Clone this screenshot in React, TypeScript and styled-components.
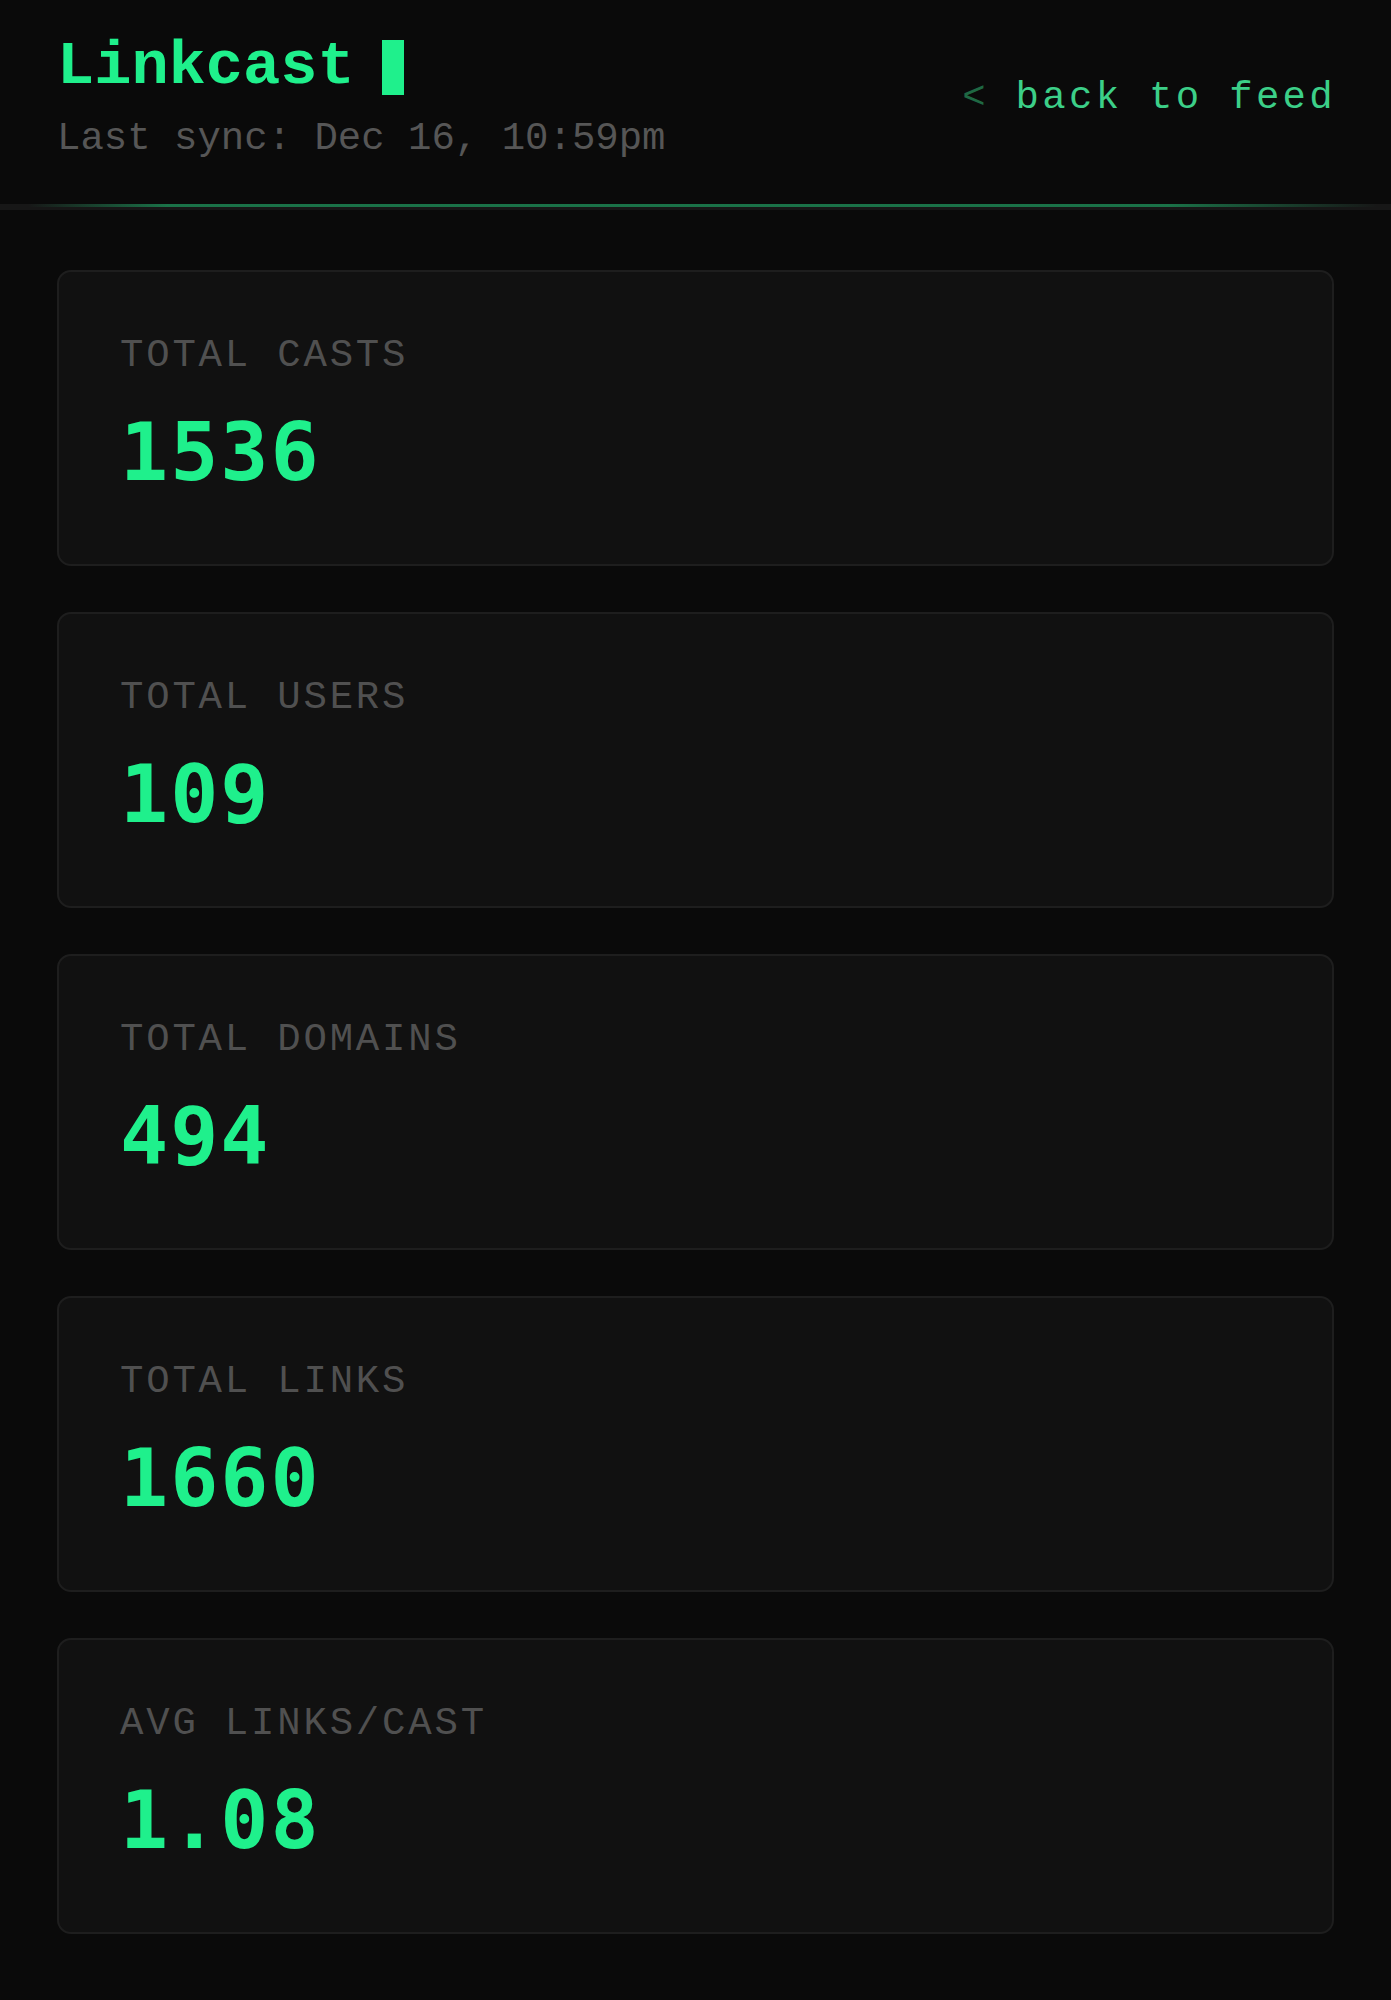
import React from "react";
import styled, { createGlobalStyle } from "styled-components";

const GlobalStyle = createGlobalStyle`
  html, body {
    margin: 0;
    padding: 0;
    background: #0a0a0a;
  }
  body {
    font-family: "Liberation Mono", "DejaVu Sans Mono", monospace;
    -webkit-font-smoothing: antialiased;
  }
`;

const Page = styled.div`
  min-height: 2000px;
  background: #0a0a0a;
  display: flex;
  flex-direction: column;
`;

const Header = styled.header`
  display: flex;
  justify-content: space-between;
  align-items: center;
  padding: 30px 55px 41px 57px;
`;

const Brand = styled.div`
  display: flex;
  flex-direction: column;
`;

const TitleRow = styled.div`
  display: flex;
  align-items: center;
  height: 74px;
`;

const Title = styled.h1`
  margin: 0;
  font-family: "Liberation Mono", monospace;
  font-weight: 700;
  font-size: 62px;
  line-height: 74px;
  color: #1ff08c;
`;

const Cursor = styled.span`
  display: inline-block;
  width: 22px;
  height: 55px;
  margin-left: 27px;
  background: #1ff08c;
`;

const Sync = styled.div`
  margin-top: 12px;
  font-family: "Liberation Mono", monospace;
  font-size: 39px;
  line-height: 47px;
  color: #565656;
`;

const BackLink = styled.a`
  font-family: "Liberation Mono", monospace;
  font-size: 39px;
  line-height: 47px;
  letter-spacing: 3.3px;
  color: #3ccf88;
  text-decoration: none;
  margin-top: 4px;
`;

const Chevron = styled.span`
  color: #1f6843;
`;

const HeaderRule = styled.div`
  height: 6px;
  background-color: #171717;
  background-image: linear-gradient(
    90deg,
    transparent 2%,
    rgba(31, 240, 140, 0.42) 12%,
    rgba(31, 240, 140, 0.42) 84%,
    transparent 99%
  );
  background-size: 100% 3px;
  background-repeat: no-repeat;
  background-position: top left;
`;

const Main = styled.main`
  display: flex;
  flex-direction: column;
  gap: 46px;
  padding: 60px 57px 65px;
`;

const Card = styled.section`
  background: #111111;
  border: 2px solid #1e1e1e;
  border-radius: 14px;
  padding: 61px 61px 71px;
  display: flex;
  flex-direction: column;
`;

const Label = styled.div`
  font-family: "Liberation Mono", monospace;
  font-size: 39px;
  line-height: 46px;
  letter-spacing: 2.8px;
  text-transform: uppercase;
  color: #505050;
`;

const Value = styled.div`
  margin-top: 34px;
  font-family: "DejaVu Sans Mono", "Liberation Mono", monospace;
  font-weight: 700;
  font-size: 80px;
  line-height: 80px;
  letter-spacing: 2px;
  color: #1ff08c;
`;

const stats = [
  { label: "Total Casts", value: "1536" },
  { label: "Total Users", value: "109" },
  { label: "Total Domains", value: "494" },
  { label: "Total Links", value: "1660" },
  { label: "Avg Links/Cast", value: "1.08" },
];

export default function App() {
  return (
    <>
      <GlobalStyle />
      <Page>
        <Header>
          <Brand>
            <TitleRow>
              <Title>Linkcast</Title>
              <Cursor />
            </TitleRow>
            <Sync>Last sync: Dec 16, 10:59pm</Sync>
          </Brand>
          <BackLink href="#">
            <Chevron>&lt;</Chevron> back to feed
          </BackLink>
        </Header>
        <HeaderRule />
        <Main>
          {stats.map((s) => (
            <Card key={s.label}>
              <Label>{s.label}</Label>
              <Value>{s.value}</Value>
            </Card>
          ))}
        </Main>
      </Page>
    </>
  );
}
